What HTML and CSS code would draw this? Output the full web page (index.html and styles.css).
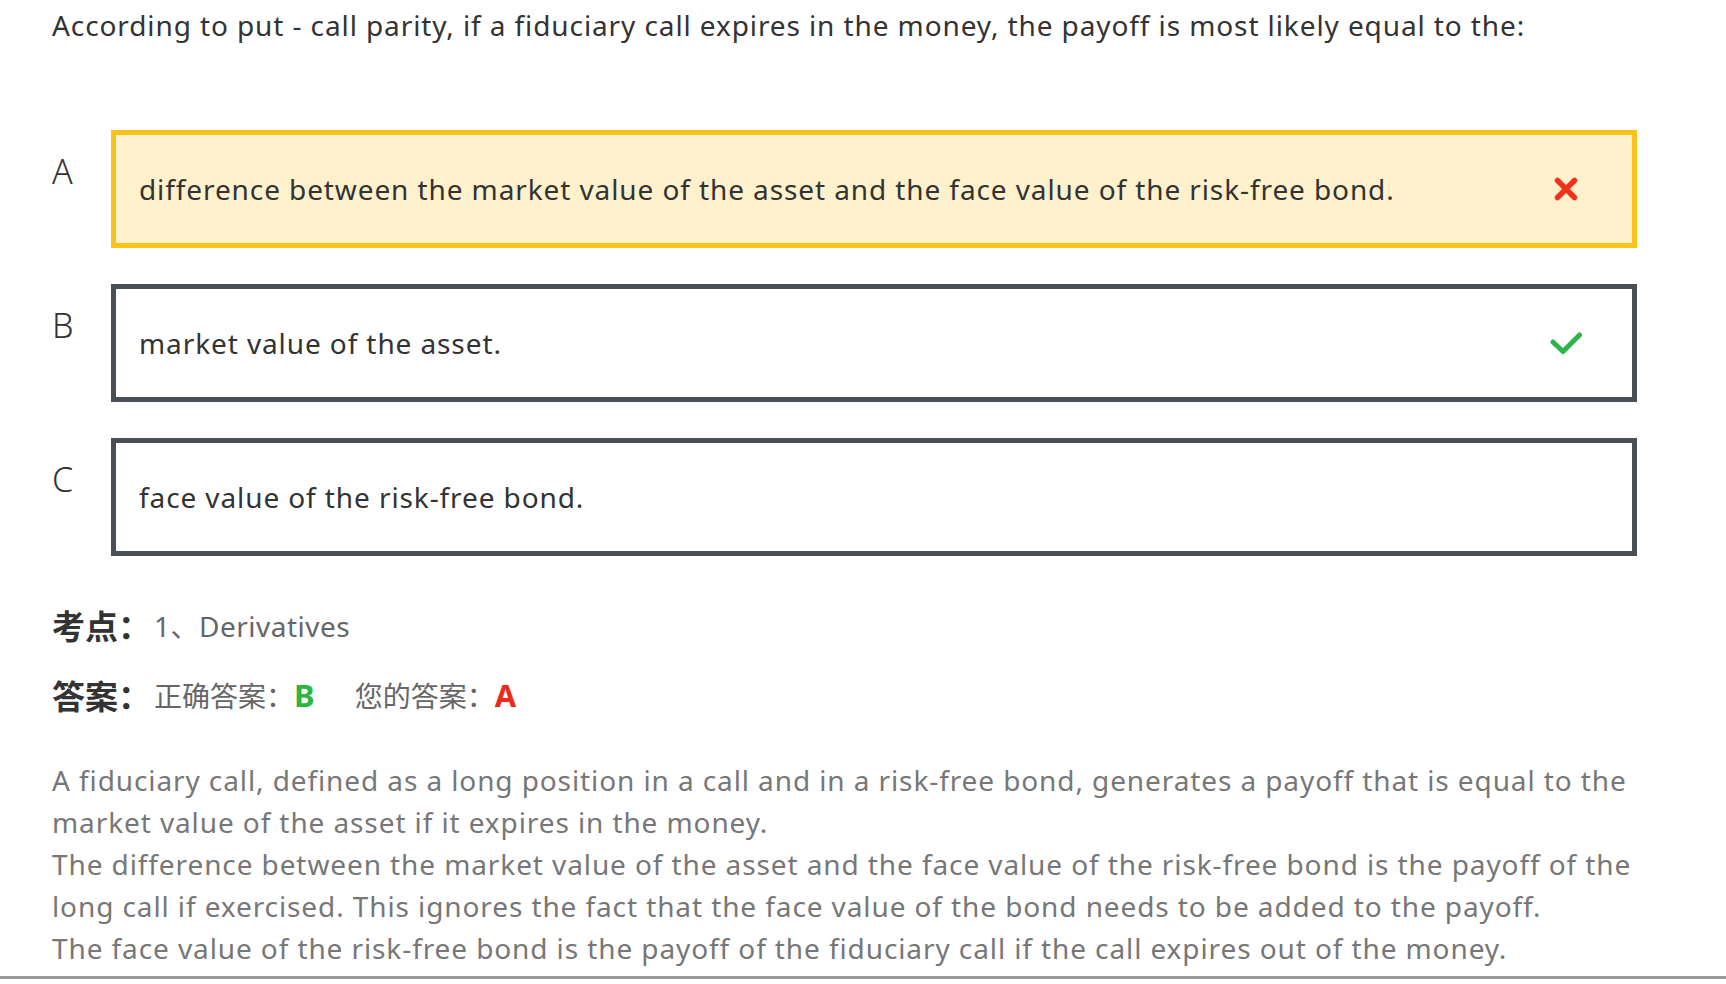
FILE: index.html
```html
<!DOCTYPE html>
<html lang="zh">
<head>
<meta charset="utf-8">
<title>Question</title>
<link rel="stylesheet" href="styles.css">
</head>
<body>
<div class="page">
  <div class="question">According to put - call parity, if a fiduciary call expires in the money, the payoff is most likely equal to the:</div>

  <div class="options">
    <div class="option">
      <div class="letter">A</div>
      <div class="box box-wrong">
        <span class="box-text">difference between the market value of the asset and the face value of the risk-free bond.</span>
        <svg class="mark mark-x" width="24" height="24" viewBox="0 0 24 24"><path d="M3.5 3.5 L20.5 20.5 M20.5 3.5 L3.5 20.5" stroke="#f2301e" stroke-width="5.5" stroke-linecap="round" fill="none"/></svg>
      </div>
    </div>
    <div class="option">
      <div class="letter">B</div>
      <div class="box">
        <span class="box-text">market value of the asset.</span>
        <svg class="mark" width="32" height="24" viewBox="0 0 32 24"><path d="M3 11 L13 20.5 L29.5 4" stroke="#2db548" stroke-width="5" stroke-linecap="round" stroke-linejoin="round" fill="none"/></svg>
      </div>
    </div>
    <div class="option">
      <div class="letter">C</div>
      <div class="box">
        <span class="box-text">face value of the risk-free bond.</span>
      </div>
    </div>
  </div>

  <div class="meta">
    <div class="meta-row"><span class="meta-label">考点：</span><span class="meta-value latin">1、Derivatives</span></div>
    <div class="meta-row"><span class="meta-label">答案：</span><span class="meta-value">正确答案：<b class="right">B</b></span><span class="meta-value mine">您的答案：<b class="wrong">A</b></span></div>
  </div>

  <div class="explain">
    <p>A fiduciary call, defined as a long position in a call and in a risk-free bond, generates a payoff that is equal to the market value of the asset if it expires in the money.</p>
    <p>The difference between the market value of the asset and the face value of the risk-free bond is the payoff of the long call if exercised. This ignores the fact that the face value of the bond needs to be added to the payoff.</p>
    <p>The face value of the risk-free bond is the payoff of the fiduciary call if the call expires out of the money.</p>
  </div>
</div>
<div class="rule"></div>
</body>
</html>
```

FILE: styles.css
```css
html, body {
  margin: 0;
  padding: 0;
  background: #ffffff;
}
body {
  font-family: "Noto Sans", "Noto Sans CJK SC", sans-serif;
  color: #333333;
  width: 1726px;
  height: 984px;
  overflow: hidden;
  position: relative;
}
.page {
  padding: 5px 66px 0 52px;
}
.question {
  font-size: 28px;
  letter-spacing: 0.9px;
  line-height: 40px;
  height: 40px;
  color: #333333;
}
.options {
  display: flex;
  flex-direction: column;
  gap: 36px;
  margin-top: 85px;
  margin-right: 23px;
}
.option {
  display: flex;
  align-items: flex-start;
}
.letter {
  width: 59px;
  flex: none;
  font-size: 34px;
  line-height: 40px;
  padding-top: 21px;
  color: #333333;
  font-weight: 300;
}
.box {
  flex: 1;
  height: 118px;
  box-sizing: border-box;
  border: 5px solid #4a4e55;
  background: #ffffff;
  display: flex;
  align-items: center;
  justify-content: space-between;
  padding: 0 50px 0 23px;
}
.box-wrong {
  border-color: #f9c31b;
  background: #fff1cc;
}
.box-text {
  font-size: 28px;
  letter-spacing: 0.9px;
  color: #333333;
}
.mark {
  flex: none;
}
.mark-x {
  margin-right: 4px;
}
.meta {
  margin-top: 34px;
}
.meta-row {
  display: flex;
  align-items: center;
  height: 70px;
}
.meta-label {
  font-family: "Noto Sans CJK SC", sans-serif;
  font-weight: 700;
  font-size: 33px;
  color: #333333;
  width: 102px;
  white-space: nowrap;
}
.meta-value {
  font-family: "Noto Sans", "Noto Sans CJK SC", sans-serif;
  font-size: 28px;
  color: #666666;
}
.meta-value.latin {
  letter-spacing: 0.5px;
}
.meta-value b {
  font-weight: 700;
  font-size: 31px;
}
.mine {
  margin-left: 40px;
}
.right { color: #2cb63f; }
.wrong { color: #ee2a1a; }
.explain {
  margin-top: 29px;
  font-size: 28px;
  letter-spacing: 0.9px;
  line-height: 42px;
  color: #777777;
}
.explain p {
  margin: 0;
}
.rule {
  position: absolute;
  left: 0;
  right: 0;
  top: 976px;
  height: 3px;
  background: #9a9a9a;
}
```
